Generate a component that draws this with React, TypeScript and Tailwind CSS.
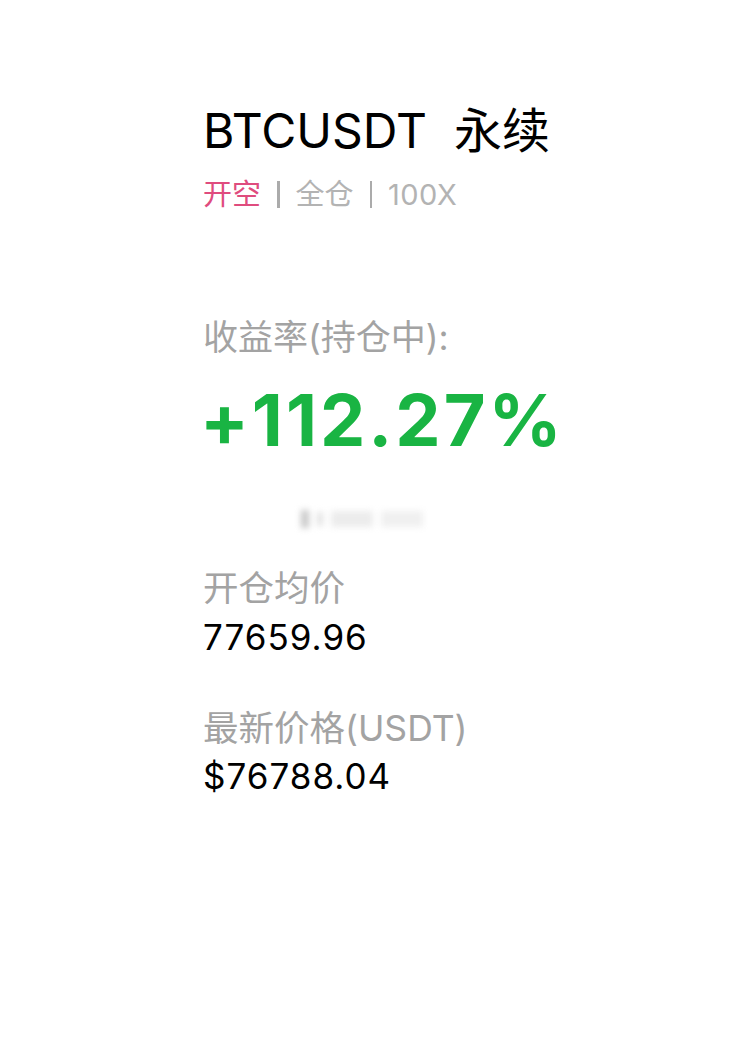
const latin = "font-['Inter','Noto_Sans_CJK_SC',sans-serif]";

function Stat({ label, value }: { label: string; value: string }) {
  return (
    <div>
      <div className="text-[35.5px] leading-none text-[#a3a3a3]">{label}</div>
      <div className="mt-[13px] text-[35px] leading-none text-black tracking-[1px]">{value}</div>
    </div>
  );
}

export default function App() {
  return (
    <div className={`min-h-[1042px] w-[729px] bg-white pl-[203px] pt-[107px] ${latin}`}>
      <h1 className="text-[48px] leading-none font-normal text-black whitespace-pre">
        BTCUSDT  永续
      </h1>

      <div className="mt-[25px] flex items-center text-[29px] leading-none">
        <span className="text-[#df4c7e]">开空</span>
        <span className="mx-[16px] h-[27px] w-[2.5px] bg-[#ababab]" />
        <span className="text-[#b3b3b3]">全仓</span>
        <span className="mx-[16px] h-[27px] w-[2.5px] bg-[#ababab]" />
        <span className="text-[#b3b3b3] tracking-[0.5px]">100X</span>
      </div>

      <div className="mt-[111px] text-[35px] leading-none text-[#a3a3a3]">收益率(持仓中):</div>
      <div className="mt-[29px] -ml-[3px] text-[72px] leading-none font-bold text-[#19b443] tracking-[3px]">
        +112.27%
      </div>

      {/* redacted strip */}
      <div className="ml-[98px] mt-[53px] flex h-[20px] w-[132px] items-center gap-[8px] blur-[3px]">
        <span className="h-[18px] w-[8px] bg-[#c8c8c8]" />
        <span className="h-[14px] w-[6px] bg-[#e2e2e2]" />
        <span className="h-[16px] w-[42px] bg-[#ececec]" />
        <span className="h-[16px] w-[42px] bg-[#f0f0f0]" />
      </div>

      <div className="mt-[42px] flex flex-col gap-[56px]">
        <Stat label="开仓均价" value="77659.96" />
        <Stat label="最新价格(USDT)" value="$76788.04" />
      </div>
    </div>
  );
}
